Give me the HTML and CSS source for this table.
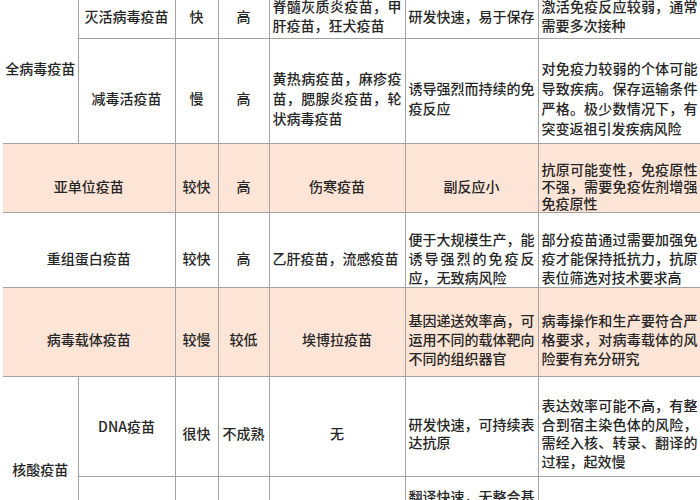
FILE: index.html
```html
<!DOCTYPE html>
<html lang="zh-CN">
<head>
<meta charset="utf-8">
<title>疫苗类型比较</title>
<link rel="stylesheet" href="styles.css">
</head>
<body>
<div class="page">
<table class="vt">
  <colgroup>
    <col class="w1"><col class="w2"><col class="w3"><col class="w4"><col class="w5"><col class="w6"><col class="w7">
  </colgroup>
  <tr class="ra">
    <td rowspan="2" class="grp c">全病毒疫苗</td>
    <td class="c">灭活病毒疫苗</td>
    <td class="c">快</td>
    <td class="c">高</td>
    <td class="j">脊髓灰质炎疫苗，甲肝疫苗，狂犬疫苗</td>
    <td class="j">研发快速，易于保存</td>
    <td class="j">激活免疫反应较弱，通常需要多次接种</td>
  </tr>
  <tr class="rb">
    <td class="c">减毒活疫苗</td>
    <td class="c">慢</td>
    <td class="c">高</td>
    <td class="j">黄热病疫苗，麻疹疫苗，腮腺炎疫苗，轮状病毒疫苗</td>
    <td class="j">诱导强烈而持续的免疫反应</td>
    <td class="j">对免疫力较弱的个体可能导致疾病。保存运输条件严格。极少数情况下，有突变返祖引发疾病风险</td>
  </tr>
  <tr class="rc pink">
    <td colspan="2" class="c first">亚单位疫苗</td>
    <td class="c">较快</td>
    <td class="c">高</td>
    <td class="c">伤寒疫苗</td>
    <td class="c">副反应小</td>
    <td class="j">抗原可能变性，免疫原性不强，需要免疫佐剂增强免疫原性</td>
  </tr>
  <tr class="rd">
    <td colspan="2" class="c first">重组蛋白疫苗</td>
    <td class="c">较快</td>
    <td class="c">高</td>
    <td class="j">乙肝疫苗，流感疫苗</td>
    <td class="j">便于大规模生产，能诱导强烈的免疫反应，无致病风险</td>
    <td class="j">部分疫苗通过需要加强免疫才能保持抵抗力，抗原表位筛选对技术要求高</td>
  </tr>
  <tr class="re pink">
    <td colspan="2" class="c first">病毒载体疫苗</td>
    <td class="c">较慢</td>
    <td class="c">较低</td>
    <td class="c">埃博拉疫苗</td>
    <td class="j">基因递送效率高，可运用不同的载体靶向不同的组织器官</td>
    <td class="j">病毒操作和生产要符合严格要求，对病毒载体的风险要有充分研究</td>
  </tr>
  <tr class="rf">
    <td rowspan="2" class="grp c">核酸疫苗</td>
    <td class="c dna">DNA疫苗</td>
    <td class="c">很快</td>
    <td class="c">不成熟</td>
    <td class="c">无</td>
    <td class="j">研发快速，可持续表达抗原</td>
    <td class="j">表达效率可能不高，有整合到宿主染色体的风险，需经入核、转录、翻译的过程，起效慢</td>
  </tr>
  <tr class="rg">
    <td class="c"></td>
    <td class="c"></td>
    <td class="c"></td>
    <td class="c"></td>
    <td class="j top">翻译快速，无整合基因组风险，起效快</td>
    <td class="j"></td>
  </tr>
</table>
</div>
</body>
</html>
```
FILE: styles.css
```css
html, body {
  margin: 0;
  padding: 0;
  background: #ffffff;
  overflow: hidden;
}
.page {
  width: 700px;
  height: 500px;
  overflow: hidden;
  padding-left: 3px;
  box-sizing: border-box;
}
.vt {
  margin-top: -7px;
  border-collapse: collapse;
  table-layout: fixed;
  width: 698px;
  font-family: "Noto Sans CJK SC", "Liberation Sans", sans-serif;
  font-size: 14px;
  font-weight: 500;
  line-height: 19px;
  color: #262626;
}
.w1 { width: 75px; }
.w2 { width: 97px; }
.w3 { width: 43px; }
.w4 { width: 51px; }
.w5 { width: 136px; }
.w6 { width: 133px; }
.w7 { width: 163px; }
.vt td {
  border: 1px solid #a3a3a3;
  padding: 0 3px;
  vertical-align: middle;
  overflow: hidden;
  word-break: break-all;
}
.vt td.grp,
.vt td.first {
  border-left: none;
  padding-left: 2px;
  padding-right: 2px;
}
.vt td.c { text-align: center; }
.vt td.j { text-align: justify; }
.pink td { background: #fce4d6; }

.ra { height: 45px; }

.rb { height: 105px; }
.rb td { padding-top: 13px; line-height: 20px; }

.rc { height: 69px; }
.rc td { padding-top: 17px; line-height: 17px; }

.rd { height: 75px; }
.rd td { padding-top: 16px; }

.re { height: 89px; }
.re td { padding-top: 15px; }

.rf { height: 100px; }
.rf td { padding-top: 13px; line-height: 18.5px; }
.rf td.dna { padding-top: 0; }

.rg { height: 86px; }
.vt td.top { vertical-align: top; padding-top: 10px; }
.vt td.grp { padding-top: 0; }
```
